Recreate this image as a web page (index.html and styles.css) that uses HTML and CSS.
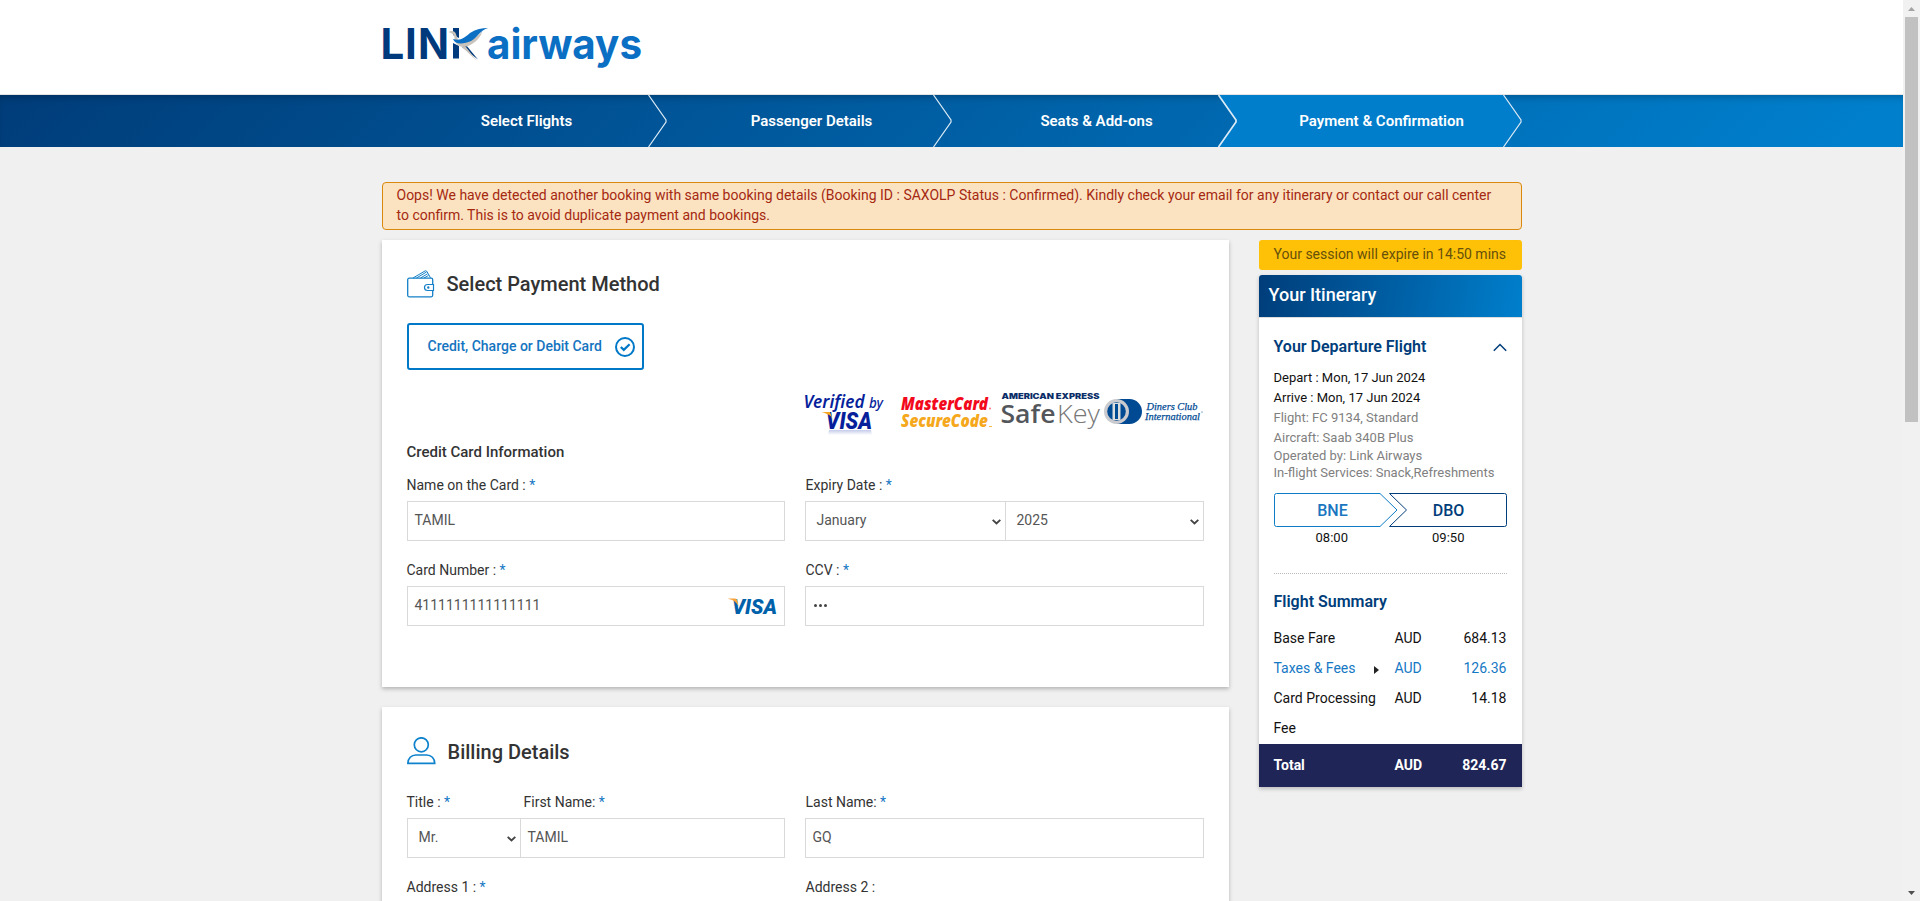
FILE: index.html
```html
<!DOCTYPE html>
<html lang="en">
<head>
<meta charset="utf-8">
<title>Link Airways - Payment</title>
<link rel="stylesheet" href="styles.css">
</head>
<body>
<div class="viewport">
<div class="page">
  <header class="header">
    <div class="container">
      <svg class="logo" width="270" height="60" viewBox="0 0 270 60" role="img" aria-label="Link airways">
        <g class="logo-dark">
          <text x="-1.500" y="48.500">L</text>
          <text x="23" y="48.500">I</text>
          <text x="36" y="48.500" textLength="31" lengthAdjust="spacingAndGlyphs">N</text>
        </g>
        <path fill="#003a7d" d="M71 18h6v10l-6-3zM71 33l6 3v12.500h-6zM80 37l4-2 12 14.500z"/>
        <path fill="#c9c3bb" d="M66.500 22c3-2 6-1 7 1l3 8c7 2 18-3 24-10-2 8-11 15-18 16-7 0-10-5-10-9 0-3-2-5-6-6zM84 37l11 14-15-14z"/>
        <path fill="#0b6fc4" d="M71 29c8 2 11-1 17-6 6-4 12-5 18-5-9 3-10 9-17 13-7 3-16 4-18-2z"/>
        <text class="logo-light" x="105" y="48.500" textLength="155" lengthAdjust="spacingAndGlyphs">airways</text>
      </svg>
    </div>
  </header>

  <nav class="steps">
    <div class="container steps-inner">
      <svg class="steps-shapes" width="1140" height="52" viewBox="0 0 1140 52">
        <path fill="#007dcb" d="M836.500 0H1121.500l17.500 26L1121.500 52H836.500l17.500-26z"/>
        <g fill="none" stroke="#dcebf6" stroke-width="1.200">
          <path d="M266.500 0l17.500 25v2L266.500 52"/><path d="M551.500 0l17.500 25v2L551.500 52"/>
          <path stroke-width="1.700" d="M836.500 0l17.500 25v2L836.500 52"/><path d="M1121.500 0l17.500 25v2L1121.500 52"/>
        </g>
      </svg>
      <span class="step">Select Flights</span>
      <span class="step">Passenger Details</span>
      <span class="step">Seats &amp; Add-ons</span>
      <span class="step">Payment &amp; Confirmation</span>
    </div>
  </nav>

  <div class="container content">
    <div class="alert">Oops! We have detected another booking with same booking details (Booking ID : SAXOLP Status : Confirmed). Kindly check your email for any itinerary or contact our call center<br>to confirm. This is to avoid duplicate payment and bookings.</div>

    <div class="columns">
      <main class="main">
        <section class="card card-payment">
          <h2 class="card-title">
            <svg width="28" height="28" viewBox="0 0 28 28" fill="none" stroke="#1580c8" stroke-width="1.200">
              <rect x=".7" y="8.200" width="25" height="18.600" rx="1.500" stroke-width="1.300"/>
              <path stroke-width="1" d="M6 8L18.300.8l1.500.5 3.700 6.500M9.500 8l10-6M13.500 8l7-4.200M17 8l4.500-2.500"/>
              <path fill="#fff" d="M26.500 14.500h-6a3 3 0 0 0 0 6h6z"/><circle cx="21.300" cy="17.500" r=".6" fill="#1580c8"/>
            </svg>
            <span>Select Payment Method</span>
          </h2>
          <button class="method" type="button">
            <span>Credit, Charge or Debit Card</span>
            <svg width="20" height="20" viewBox="0 0 20 20" fill="none" stroke="#0078c8">
              <circle cx="10" cy="10" r="9" stroke-width="2"/><path stroke-width="2.200" d="M5.800 10l3 2.900 5.800-5.600"/>
            </svg>
          </button>
          <svg class="schemes" width="402" height="46" viewBox="0 0 402 46">
            <defs><linearGradient id="fade" x2="0" y2="1"><stop stop-color="#c5cbea"/><stop offset="1" stop-color="#fff"/></linearGradient></defs>
            <path fill="url(#fade)" d="M26 38h42l1 5H25z"/>
            <g class="noto-it">
              <text class="navy" x=".5" y="16" font-size="18" textLength="61" lengthAdjust="spacingAndGlyphs">Verified</text>
              <text class="navy by" x="66" y="16" font-size="14" textLength="14" lengthAdjust="spacingAndGlyphs">by</text>
              <text class="navy visa-word" x="23" y="36.500" textLength="46" lengthAdjust="spacingAndGlyphs">VISA</text>
              <path fill="#f5a623" d="M18.500 20h8.500l3 9-2-4.500c-2-2-6-3.500-9.500-4.500z"/>
              <text class="mc-red" x="98" y="17.500" font-size="18" textLength="87" lengthAdjust="spacingAndGlyphs">MasterCard</text>
              <text class="mc-gold" x="98" y="35" font-size="18" textLength="87" lengthAdjust="spacingAndGlyphs">SecureCode</text>
            </g>
            <circle cx="187" cy="16.500" r=".9" fill="#f66"/><path stroke="#f5b849" d="M186 34.500h3"/>
            <text class="amex" x="198.500" y="6.800" textLength="98" lengthAdjust="spacingAndGlyphs">AMERICAN EXPRESS</text>
            <text class="safe" x="197.500" y="31" textLength="55" lengthAdjust="spacingAndGlyphs">Safe</text>
            <text class="key" x="254" y="31" textLength="43" lengthAdjust="spacingAndGlyphs">Key</text>
            <path fill="#004a94" d="M314 7h12.500a12.500 12.500 0 0 1 0 25H314z"/>
            <circle cx="313.500" cy="19.500" r="12.500" fill="#cbcbcf"/><circle cx="313.500" cy="19.500" r="9.300" fill="#004a94"/>
            <path fill="#ddd" d="M309.500 11h8v17h-8z"/><path fill="#004a94" d="M312 12h3v15h-3z"/>
            <g class="diners">
              <text x="343.500" y="18" textLength="51" lengthAdjust="spacingAndGlyphs">Diners Club</text>
              <text x="342" y="28" textLength="55" lengthAdjust="spacingAndGlyphs">International</text>
            </g>
            <circle cx="399" cy="20" r=".6" fill="#004a94"/>
          </svg>
          <h3 class="sub-title">Credit Card Information</h3>
          <div class="row">
            <div class="field"><label>Name on the Card : <b>*</b></label><div class="box">TAMIL</div></div>
            <div class="field"><label>Expiry Date : <b>*</b></label>
              <div class="pair">
                <div class="box select month">January<svg class="caret" width="9" height="6" viewBox="0 0 9 6"><path d="M.7.9L4.500 4.500 8.300.9"/></svg></div>
                <div class="box select joined">2025<svg class="caret" width="9" height="6" viewBox="0 0 9 6"><path d="M.7.9L4.500 4.500 8.300.9"/></svg></div>
              </div>
            </div>
          </div>
          <div class="row">
            <div class="field"><label>Card Number : <b>*</b></label>
              <div class="box">4111111111111111
                <svg class="visa" width="50" height="20" viewBox="0 0 50 20"><text x="4" y="17" textLength="45" lengthAdjust="spacingAndGlyphs">VISA</text><path fill="#f7a13a" d="M.5 1.500H7c1.500 0 2 1 2.300 2L10.500 9C8.500 5 5 2.500.5 1.900z"/></svg>
              </div>
            </div>
            <div class="field"><label>CCV : <b>*</b></label><div class="box"><span class="dots"><i></i><i></i><i></i></span></div></div>
          </div>
        </section>

        <section class="card card-billing">
          <h2 class="card-title">
            <svg width="29" height="28" viewBox="0 0 29 28" fill="none" stroke="#0e82cc" stroke-width="1.700">
              <circle cx="14.300" cy="7.800" r="7"/><path d="M.9 26.300c0-5 3.500-8.300 8-8.300h10.800c4.500 0 8 3.300 8 8.300z"/>
            </svg>
            <span>Billing Details</span>
          </h2>
          <div class="row">
            <div class="pair">
              <div class="field title-field"><label>Title : <b>*</b></label><div class="box select">Mr.<svg class="caret" width="9" height="6" viewBox="0 0 9 6"><path d="M.7.9L4.500 4.500 8.300.9"/></svg></div></div>
              <div class="field first-field"><label>First Name: <b>*</b></label><div class="box">TAMIL</div></div>
            </div>
            <div class="field"><label>Last Name: <b>*</b></label><div class="box">GQ</div></div>
          </div>
          <div class="row">
            <div class="field"><label>Address 1 : <b>*</b></label><div class="box"></div></div>
            <div class="field"><label>Address 2 :</label><div class="box"></div></div>
          </div>
        </section>
      </main>

      <aside class="side">
        <div class="session">Your session will expire in 14:50 mins</div>
        <div class="itinerary">
          <h2 class="itinerary-title">Your Itinerary</h2>
          <div class="itinerary-body">
            <h3 class="side-heading">Your Departure Flight
              <svg width="14" height="9" viewBox="0 0 14 9" fill="none" stroke="#003d7a" stroke-width="1.500"><path d="M.8 7.800L7 1.500l6.200 6.300"/></svg>
            </h3>
            <div class="flight">
              <p class="date">Depart : Mon, 17 Jun 2024</p>
              <p class="date">Arrive : Mon, 17 Jun 2024</p>
              <p>Flight: FC 9134, Standard</p>
              <p>Aircraft: Saab 340B Plus</p>
              <p class="tight">Operated by: Link Airways</p>
              <p class="tight">In-flight Services: Snack,Refreshments</p>
            </div>
            <svg class="route" width="233" height="34" viewBox="0 0 233 34">
              <g fill="none" stroke-width="1">
                <path stroke="#0d7cc6" d="M106 .5H2.500a2 2 0 0 0-2 2v29a2 2 0 0 0 2 2H106l17-16.500z"/>
                <path stroke="#003d7a" d="M115.500.5H230.500a2 2 0 0 1 2 2v29a2 2 0 0 1-2 2H115.500l17-16.500z"/>
              </g>
              <text x="58.500" y="22.500" fill="#1a76c0">BNE</text><text x="174.500" y="22.500" fill="#003d7a">DBO</text>
            </svg>
            <div class="times"><span>08:00</span><span>09:50</span></div>
            <h3 class="side-heading summary">Flight Summary</h3>
            <div class="fare"><span>Base Fare</span><span>AUD</span><span>684.13</span></div>
            <div class="fare link"><span class="taxes">Taxes &amp; Fees <svg width="5" height="8" viewBox="0 0 5 8"><path fill="#222" d="M0 0l5 4-5 4z"/></svg></span><span>AUD</span><span>126.36</span></div>
            <div class="fare"><span>Card Processing Fee</span><span>AUD</span><span>14.18</span></div>
          </div>
          <div class="fare total"><span>Total</span><span>AUD</span><span>824.67</span></div>
        </div>
      </aside>
    </div>
  </div>
</div>
<div class="scrollbar">
  <svg width="7" height="4" viewBox="0 0 7 4"><path fill="#a3a3a3" d="M3.500 0L7 4H0z"/></svg>
  <div class="thumb"></div>
  <svg class="down" width="7" height="4" viewBox="0 0 7 4"><path fill="#505050" d="M0 0h7L3.500 4z"/></svg>
</div>
</div>
</body>
</html>
```
FILE: styles.css
```css
* { box-sizing: border-box; }
body { margin: 0; font: 14px/20px Roboto, "Liberation Sans", sans-serif; color: #333; background: #f0f0f0; overflow: hidden; }
h2, h3, p { margin: 0; font-weight: 500; }
svg { display: block; flex: none; }
.viewport { display: flex; height: 901px; overflow: hidden; }
.page { width: 1903px; flex: none; overflow: hidden; }
.container { width: 1140px; margin: 0 auto; }

.header { height: 95px; background: #fff; border-bottom: 1px solid #e4e4e4; padding-top: 10px; }
.logo { overflow: visible; }
.logo text { font: 700 42px Inter, sans-serif; }
.logo-dark { fill: #003a7d; }
.logo .logo-light { fill: #0b6fc4; }

.steps { height: 52px; background: linear-gradient(135deg, #003d7a 0%, #003d7a 1%, #007fcc 97%); box-shadow: inset 0 6px 8px -5px rgba(0, 0, 0, .28); }
.steps-inner { position: relative; display: flex; height: 52px; }
.steps-shapes { position: absolute; left: 0; top: 0; }
.step { position: relative; width: 285px; padding-left: 5px; text-align: center; line-height: 52px; font-size: 15px; font-weight: 600; color: #fff; }

.content { padding-top: 35px; }
.alert { height: 48px; padding: 2px 14px; border: 1px solid #d98a0c; border-radius: 4px; background: #fbe3c1; color: #a52811; white-space: nowrap; }
.columns { display: flex; align-items: flex-start; gap: 30px; margin-top: 10px; }
.main { width: 847px; }
.card { background: #fff; padding: 30px 25px 0; box-shadow: 0 2px 4px rgba(0, 0, 0, .25); }
.card-payment { height: 447px; }
.card-billing { height: 300px; margin-top: 20px; }
.card-title { display: flex; align-items: center; height: 28px; gap: 12px; font-size: 20px; line-height: 28px; }
.card-billing .card-title span { padding-top: 2px; }
.method { display: flex; align-items: center; justify-content: space-between; width: 237px; height: 47px; margin-top: 25px; padding: 0 7px 0 19px; border: 2px solid #0078c8; border-radius: 3px; background: #fff; font: 500 14px/20px Roboto, sans-serif; color: #1474c0; }
.method span { padding-bottom: 2px; }

.schemes { margin: 22px 0 0 396px; overflow: visible; }
.noto-it { font-family: "Noto Sans", sans-serif; font-style: italic; font-weight: 600; }
.navy { fill: #071f9b; }
.by { font-weight: 500; }
.visa-word { font: italic 900 23px Roboto, sans-serif; }
.mc-red { fill: #f20a1c; font-weight: 900; }
.mc-gold { fill: #f5a81c; font-weight: 900; }
.amex { font: 900 7.500px Inter, sans-serif; fill: #0b2e69; }
.safe { font: 600 25px "Open Sans", sans-serif; fill: #53565a; }
.key { font: 300 25px "Open Sans", sans-serif; fill: #777; }
.diners { font: italic 11px "Liberation Serif", serif; fill: #004a94; stroke: #004a94; stroke-width: .25; }

.sub-title { margin-top: 4px; font-size: 15px; line-height: 20px; }
.row { display: grid; grid-template-columns: 378px 399px; gap: 20px; height: 85px; }
.sub-title + .row { margin-top: 13px; }
.field label { display: block; height: 26px; line-height: 21px; }
.field label b { font-weight: 400; color: #1578c4; }
.row > .field:nth-child(2) label { padding-left: 1px; }
.box { display: flex; align-items: center; justify-content: space-between; height: 40px; padding: 0 7px 2px; border: 1px solid #d9d9d9; background: #fff; color: #555; }
.select { padding-left: 11px; padding-right: 4px; }
.pair { display: flex; }
.month { width: 201px; }
.joined { width: 199px; margin-left: -1px; }
.caret { fill: none; stroke: #444; stroke-width: 1.900; margin-top: 3px; }
.visa { margin: 4px -1px 0 0; }
.visa text { font: italic 900 21px Roboto, sans-serif; fill: #0061ab; }
.dots { display: flex; gap: 2px; padding-left: 1px; }
.dots i { width: 3px; height: 3px; border-radius: 50%; background: #444; }
.card-billing .row { margin-top: 27px; }
.card-billing .row + .row { margin-top: 0; }
.title-field { width: 114px; }
.first-field { width: 265px; margin-left: -1px; }
.first-field label { padding-left: 4px; }

.side { width: 263px; }
.session { height: 30px; padding-left: 15px; line-height: 29px; border-radius: 3px; background: #ffc107; color: #66500c; white-space: nowrap; }
.itinerary { margin-top: 5px; box-shadow: 0 2px 4px rgba(0, 0, 0, .22); }
.itinerary-title { height: 42px; padding-left: 10px; border-radius: 3px 3px 0 0; background: linear-gradient(100deg, #003d7a, #007fcc); color: #fff; font-size: 18px; line-height: 40px; }
.itinerary-body { height: 427px; padding: 19px 15px 0; border-top: 1px solid #ddd; background: #fff; }
.side-heading { display: flex; align-items: center; justify-content: space-between; height: 20px; font-size: 16px; font-weight: 600; color: #003d7a; }
.flight { margin-top: 11px; font-size: 13px; color: #808080; }
.flight p { font-weight: 400; line-height: 20px; white-space: nowrap; }
.flight .date { color: #111; }
.flight .tight { line-height: 17px; }
.flight p:nth-child(4) { height: 19px; }
.route { margin-top: 12px; }
.route text { font: 500 16px Roboto, sans-serif; text-anchor: middle; }
.times { display: grid; grid-template-columns: 1fr 1fr; height: 47px; padding-top: 1px; text-align: center; font-size: 13px; color: #111; border-bottom: 1px dotted #bbb; }
.summary { margin: 18px 0 11px; }
.fare { display: grid; grid-template-columns: 121px 50px 1fr; line-height: 30px; color: #111; }
.fare span:last-child { text-align: right; }
.link { color: #1578c4; }
.taxes { display: flex; justify-content: space-between; align-items: center; padding-right: 16px; }
.taxes svg { margin-top: 3px; }
.total { height: 43px; padding: 0 15px; background: #1f2557; color: #fff; line-height: 42px; font-weight: 700; }

.scrollbar { display: flex; flex-direction: column; align-items: center; width: 17px; flex: none; padding: 7px 0 6px; background: #f1f1f1; }
.thumb { width: 13px; height: 405px; margin-top: 6px; background: #c1c1c1; }
.down { margin-top: auto; }
```
